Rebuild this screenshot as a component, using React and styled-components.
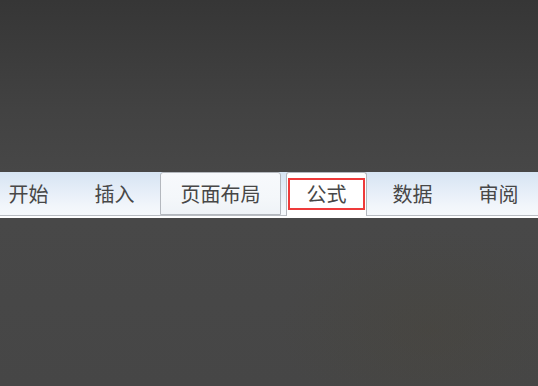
import React from "react";
import styled, { createGlobalStyle } from "styled-components";

const GlobalStyle = createGlobalStyle`
  html, body {
    margin: 0;
    padding: 0;
    width: 538px;
    height: 386px;
    overflow: hidden;
  }
  body {
    background: #444;
    font-family: "Noto Sans CJK SC", "Noto Sans", sans-serif;
  }
`;

const Page = styled.div`
  width: 538px;
  height: 386px;
  display: flex;
  flex-direction: column;
  background:
    radial-gradient(ellipse 150px 100px at 430px 330px, rgba(72, 69, 60, 0.45), rgba(72, 69, 60, 0) 100%),
    linear-gradient(180deg, #363636 0px, #424242 110px, #474747 172px, #484848 220px, #464646 386px);
  overflow: hidden;
`;

const TopArea = styled.div`
  height: 172px;
  flex: none;
`;

const Strip = styled.div`
  flex: none;
  height: 44px;
  box-sizing: border-box;
  display: flex;
  align-items: flex-end;
  gap: 5px;
  margin-left: -12px;
  width: 560px;
  border-bottom: 1px solid #b9bdc3;
  background: linear-gradient(180deg, #d6e4f3 0%, #e6eef8 45%, #f2f6fb 80%, #f6f9fc 100%);
`;

const WhiteLine = styled.div`
  flex: none;
  height: 2px;
  background: #ffffff;
`;

const Tab = styled.div`
  position: relative;
  flex: none;
  box-sizing: border-box;
  height: ${(p) => (p.$active ? "44px" : "43px")};
  margin-bottom: ${(p) => (p.$active ? "-1px" : "0")};
  padding: 0 19.5px;
  padding-bottom: ${(p) => (p.$active ? "1px" : "0")};
  display: flex;
  align-items: center;
  justify-content: center;
  font-size: 20px;
  line-height: 1;
  color: #474747;
  white-space: nowrap;
  border: 1px solid ${(p) => (p.$active || p.$hover ? "#b4b8be" : "transparent")};
  border-bottom: ${(p) => (p.$active ? "none" : p.$hover ? "1px solid #b4b8be" : "1px solid transparent")};
  border-radius: 3px 3px 0 0;
  background: ${(p) =>
    p.$active
      ? "#ffffff"
      : p.$hover
      ? "linear-gradient(180deg, #f7f9fc 0%, #f4f7fa 60%, #eff3f7 100%)"
      : "transparent"};
`;

const Highlight = styled.div`
  position: absolute;
  left: 1px;
  right: 1px;
  top: 5px;
  bottom: 6px;
  border: 2px solid #ee3a3a;
  pointer-events: none;
`;

const tabs = [
  { label: "开始" },
  { label: "插入" },
  { label: "页面布局", hover: true },
  { label: "公式", active: true },
  { label: "数据" },
  { label: "审阅" },
];

export default function App() {
  return (
    <>
      <GlobalStyle />
      <Page>
        <TopArea />
        <Strip>
          {tabs.map((t) => (
            <Tab key={t.label} $active={t.active} $hover={t.hover}>
              {t.label}
              {t.active && <Highlight />}
            </Tab>
          ))}
        </Strip>
        <WhiteLine />
      </Page>
    </>
  );
}
